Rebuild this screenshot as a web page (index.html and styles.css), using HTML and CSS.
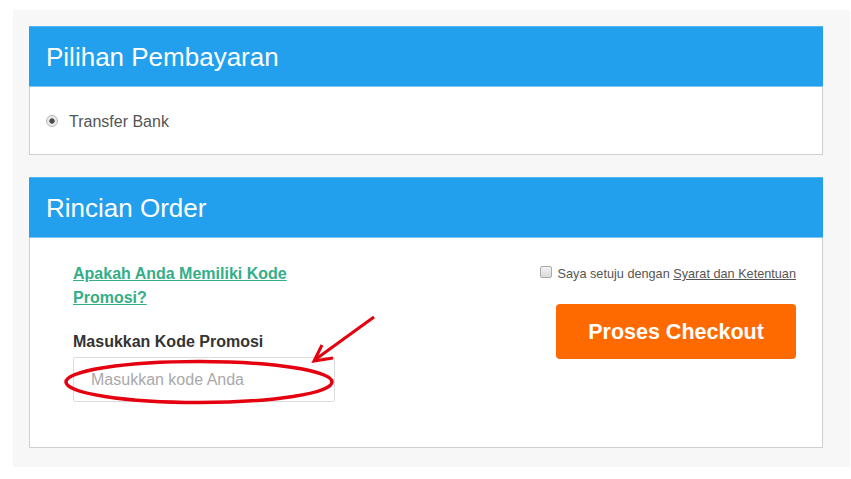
FILE: index.html
```html
<!DOCTYPE html>
<html lang="id">
<head>
<meta charset="utf-8">
<title>Checkout</title>
<link rel="stylesheet" href="styles.css">
</head>
<body>
<div class="page">
  <section class="card">
    <h2 class="card-head">Pilihan Pembayaran</h2>
    <div class="card-body pay-body">
      <label class="radio-row"><span class="radio"></span>Transfer Bank</label>
    </div>
  </section>
  <section class="card">
    <h2 class="card-head">Rincian Order</h2>
    <div class="card-body order-body">
      <div class="promo">
        <a class="promo-link" href="#">Apakah Anda Memiliki Kode Promosi?</a>
        <div class="promo-label">Masukkan Kode Promosi</div>
        <div class="promo-input">Masukkan kode Anda</div>
      </div>
      <div class="checkout">
        <label class="agree"><span class="checkbox"></span>Saya setuju dengan <a href="#">Syarat dan Ketentuan</a></label>
        <button class="btn">Proses Checkout</button>
      </div>
    </div>
  </section>
  <svg class="annot" width="851" height="479" viewBox="0 0 851 479">
    <ellipse cx="199" cy="382" rx="133" ry="20.5" fill="none" stroke="#e4000f" stroke-width="3.5"/>
    <line x1="374" y1="317" x2="316" y2="359" stroke="#e4000f" stroke-width="3"/>
    <polyline points="322,345 314,361 333,358" fill="none" stroke="#e4000f" stroke-width="3" stroke-linejoin="miter"/>
  </svg>
</div>
</body>
</html>
```
FILE: styles.css
```css
* { box-sizing: border-box; }
html, body { margin: 0; padding: 0; background: #fff; }
body {
  font-family: "Liberation Sans", Arial, sans-serif;
  width: 851px;
  height: 479px;
  overflow: hidden;
}
.page {
  margin: 10px 1px 0 13px;
  height: 457px;
  background: #f7f7f7;
  padding: 16px 27px 20px 16px;
  display: flex;
  flex-direction: column;
  gap: 22px;
}
.card {
  background: #fff;
  border: 1px solid #cfcfcf;
  border-top: none;
}
.card-head {
  margin: 0 -1px;
  height: 61px;
  background: #22a0ee;
  border-top: 1px solid #52b6f2;
  border-bottom: 1px solid #7ec6f0;
  color: #fff;
  font-weight: normal;
  font-size: 26px;
  line-height: 61px;
  padding-left: 17px;
}
.pay-body {
  height: 67px;
  display: flex;
  align-items: center;
  padding: 2px 0 0 16px;
}
.radio-row {
  display: flex;
  align-items: center;
  font-size: 16px;
  color: #555;
  gap: 11px;
}
.radio {
  width: 12px;
  height: 12px;
  border-radius: 50%;
  border: 1px solid #b5b5b5;
  background: radial-gradient(circle, #4a4a4a 0 2.3px, #e6e6e6 3px, #f4f4f4 6px);
  position: relative;
  top: -1px;
}
.order-body {
  height: 209px;
  display: flex;
  justify-content: space-between;
  padding: 24px 26px 0 43px;
}
.promo {
  width: 262px;
  display: flex;
  flex-direction: column;
}
.promo-link {
  color: #33ae88;
  font-weight: bold;
  font-size: 16px;
  line-height: 24px;
  text-decoration: underline;
  margin-right: 20px;
}
.promo-label {
  margin-top: 22px;
  font-weight: bold;
  font-size: 16px;
  color: #333;
  line-height: 20px;
}
.promo-input {
  margin-top: 5px;
  height: 45px;
  border: 1px solid #dcdcdc;
  border-radius: 2px;
  padding-left: 17px;
  font-size: 16px;
  color: #a9a9a9;
  line-height: 43px;
}
.checkout {
  display: flex;
  flex-direction: column;
  align-items: flex-end;
  padding-top: 5px;
}
.agree {
  display: flex;
  align-items: center;
  font-size: 12.7px;
  color: #555;
  white-space: pre;
}
.agree a { color: #555; text-decoration: underline; }
.checkbox {
  width: 12px;
  height: 12px;
  border: 1px solid #aaa;
  border-radius: 2px;
  background: linear-gradient(#f2f2f2, #dadada);
  margin-right: 6px;
  position: relative;
  top: -2px;
}
.btn {
  margin-top: 23px;
  width: 240px;
  height: 55px;
  border: none;
  border-radius: 4px;
  background: #ff6a00;
  color: #fff;
  font-family: "Liberation Sans", Arial, sans-serif;
  font-weight: bold;
  font-size: 21.5px;
  padding: 2px 0 0;
}
.annot {
  position: absolute;
  left: 0;
  top: 0;
  pointer-events: none;
}
```
